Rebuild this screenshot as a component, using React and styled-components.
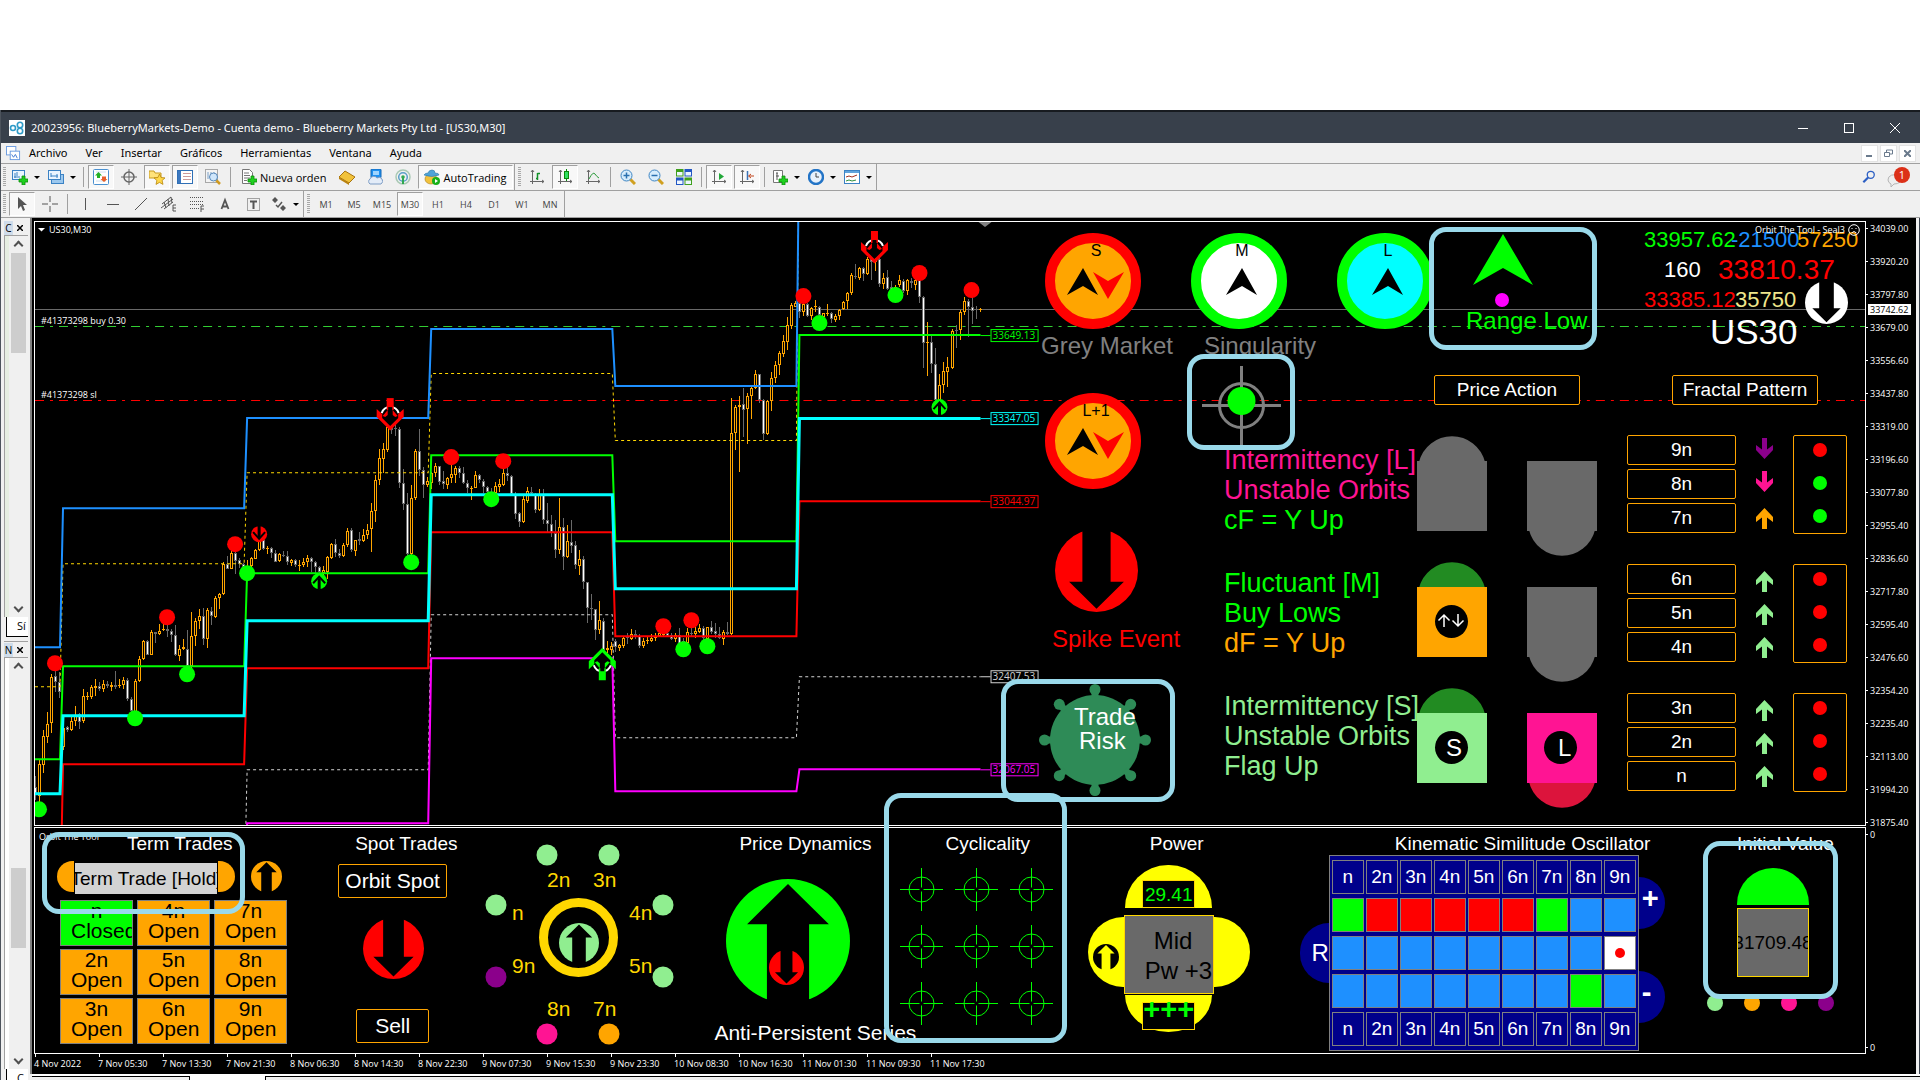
import React from "react";
import styled, { createGlobalStyle, css } from "styled-components";

const C = {
  lime: "#00ff00",
  red: "#ff0000",
  orange: "#ffa500",
  gold: "#ffd700",
  blue: "#1e90ff",
  aqua: "#00ffff",
  magenta: "#ff00ff",
  pink: "#ff1493",
  mint: "#90ee90",
  purple: "#8b008b",
  navy: "#00008b",
  gray: "#808080",
  dim: "#696969",
  forest: "#228b22",
  yellow: "#ffff00",
  callout: "#9ad9ea",
};

const ui = `"Open Sans", "Noto Sans", sans-serif`;
const chrome = `"Noto Sans", "Open Sans", sans-serif`;
const arial = `"Liberation Sans", Arial, sans-serif`;

const Global = createGlobalStyle`
  * { box-sizing: border-box; }
  html, body, #root { height: 100%; }
  body { margin: 0; background: #fff; overflow: hidden; font-family: ${ui}; font-size: 11px; }
  button { margin: 0; padding: 0; border: 0; background: none; font: inherit; color: inherit; }
  svg { display: block; flex: none; }
  ul, ol { list-style: none; margin: 0; padding: 0; }
`;

const Page = styled.div`
  height: 100%;
  padding-top: 110px;
`;
const Window = styled.div`
  height: 100%;
  display: flex;
  flex-direction: column;
  background: #f0f0f0;
  border-left: 1px solid #4c535c;
`;
const TitleBar = styled.header`
  height: 33px;
  flex: none;
  display: flex;
  align-items: center;
  border-top: 2px solid #171b20;
  background: #38404b;
  color: #fff;
  padding-left: 8px;
  gap: 6px;
`;
const Title = styled.h1`
  margin: 0;
  flex: 1;
  font-family: ${chrome};
  font-size: 11px;
  font-weight: 400;
`;
const WinButtons = styled.div`
  display: flex;
  padding-right: 2px;
`;
const WinButton = styled.button`
  width: 46px;
  height: 30px;
  display: grid;
  place-items: center;
`;
const MenuBar = styled.nav`
  height: 21px;
  flex: none;
  display: flex;
  align-items: center;
  border-bottom: 1px solid #a0a0a0;
  padding: 0 4px 0 5px;
`;
const MenuList = styled.div`
  flex: 1;
  display: flex;
  gap: 18px;
  padding-left: 8px;
  font-family: ${chrome};
  button { font-size: 11px; line-height: 20px; }
`;
const MdiButton = styled.button`
  width: 17px;
  height: 17px;
  margin-left: 2px;
  display: grid;
  place-items: center;
  background: #fff;
  border: 1px solid #e3e3e3;
`;
const ToolRow = styled.div`
  height: 27px;
  flex: none;
  display: flex;
  align-items: center;
  border-bottom: 1px solid #a0a0a0;
  padding: 0 5px 0 2px;
`;
const Spacer = styled.div`
  flex: 1;
`;
const Grip = styled.span`
  width: 3px;
  height: 20px;
  margin-right: 2px;
  margin-left: ${(p) => (p.$lead ? "3px" : "0")};
  background: repeating-linear-gradient(#a8a8a8 0 1px, #f0f0f0 1px 2px);
`;
const Divider = styled.span`
  width: 1px;
  height: ${(p) => (p.$tall ? "26px" : "20px")};
  margin: 0 ${(p) => (p.$tall ? "0" : "3px")};
  background: #a0a0a0;
`;
const Tool = styled.button`
  height: 24px;
  min-width: 26px;
  margin: 0 1px;
  display: flex;
  align-items: center;
  justify-content: center;
  gap: 3px;
  padding: 0 ${(p) => (p.$label ? "5px" : "2px")};
  border: 1px solid transparent;
  ${(p) =>
    p.$on &&
    css`
      background: #f8f8f8;
      border-color: #a0a0a0 #fff #fff #a0a0a0;
    `}
`;
const Caret = styled.i`
  border: 3px solid transparent;
  border-top-color: #000;
  border-bottom: 0;
  margin-left: 3px;
`;
const Period = styled(Tool)`
  font-size: 9px;
  color: #444;
`;
const Workspace = styled.div`
  flex: 1;
  min-height: 0;
  display: flex;
`;

/* Docked side panes */
const Dock = styled.aside`
  width: 31px;
  flex: none;
  display: flex;
  flex-direction: column;
  border-right: 2px solid #808080;
  padding: 2px 2px 0 3px;
`;
const Pane = styled.section`
  flex: ${(p) => (p.$grow ? "1" : "0 0 422px")};
  min-height: 0;
  margin-bottom: ${(p) => (p.$grow ? "-20px" : "0")};
  display: flex;
  flex-direction: column;
  border-bottom: 1px solid #a0a0a0;
`;
const PaneHead = styled.div`
  height: 15px;
  flex: none;
  display: flex;
  align-items: center;
  gap: 4px;
  font-size: 10px;
  span { background: #cfdcea; width: 9px; text-align: center; }
`;
const PaneBody = styled.div`
  flex: 1;
  display: flex;
  border: 1px solid #a0a0a0;
  border-width: 1px 0 0 1px;
  background: linear-gradient(90deg, ${(p) => p.$tint} 4px, #f0f0f0 4px);
`;
const Scroll = styled.div`
  width: 16px;
  margin-left: auto;
  margin-right: 2px;
  display: flex;
  flex-direction: column;
  align-items: center;
  padding: 6px 0;
  &::before, &::after { content: ""; width: 5px; height: 5px; border: 2px solid #505050; flex: none; }
  &::before { border-width: 2px 0 0 2px; transform: rotate(45deg); }
  &::after { border-width: 0 2px 2px 0; transform: rotate(45deg); }
`;
const Thumb = styled.div`
  width: 15px;
  height: ${(p) => p.$h}px;
  margin: ${(p) => p.$top}px 0 auto;
  background: #cdcdcd;
`;
const PaneTab = styled.div`
  height: 20px;
  flex: none;
  margin: 0 0 4px 2px;
  padding-left: 10px;
  border: 1px solid #000;
  border-width: 0 0 1px 1px;
  background: #fff;
  overflow: hidden;
  line-height: 18px;
`;

/* Chart window */
const Chart = styled.main`
  position: relative;
  flex: 1;
  min-width: 0;
  display: flex;
  flex-direction: column;
  background: #000;
  color: #fff;
  padding: 3px 0 0 2px;
`;
const WindowEdge = styled.div`
  width: 4px;
  background: #f0f0f0;
  border-right: 1px solid #38404b;
`;
const MainRow = styled.div`
  flex: 1;
  min-height: 0;
  display: grid;
  grid-template-columns: minmax(0, 1fr) 50px;
  margin-bottom: 1px;
`;
const Plot = styled.section`
  position: relative;
  border: 1px solid #fff;
  overflow: hidden;
`;
const PlotArt = styled.svg`
  width: 100%;
  height: 100%;
`;
const Scale = styled.ol`
  position: relative;
  display: flex;
  flex-direction: column;
  justify-content: space-between;
  font-size: 9px;
  line-height: 13px;
  margin: 1px 0 ${(p) => (p.$over ? "-3px" : "0")};
`;
const ScaleItem = styled.li`
  display: flex;
  align-items: center;
  gap: 2px;
  &::before { content: ""; width: 2px; height: 1px; background: #fff; }
`;
const PriceTag = styled.li`
  position: absolute;
  left: 2px;
  top: 82px;
  background: #fff;
  color: #000;
  line-height: 11px;
  padding: 0 3px 0 2px;
`;

const Board = styled.div`
  position: absolute;
  inset: 0;
  display: flex;
  justify-content: flex-end;
  padding: 11px 1px 0 0;
  font-family: ${arial};
`;
const Stack = styled.div`
  display: flex;
  flex-direction: column;
  align-items: flex-start;
  width: ${(p) => (p.$w ? p.$w + "px" : "auto")};
  padding-left: ${(p) => p.$in || 0}px;
  flex: none;
`;
const Row = styled.div`
  display: flex;
  align-items: flex-start;
`;
const Block = styled.div`
  margin-top: ${(p) => p.$top || 0}px;
  margin-left: ${(p) => p.$in || 0}px;
`;
const Caption = styled.div`
  font-size: 24px;
  line-height: 28px;
  white-space: nowrap;
  color: ${(p) => p.$c};
  margin-top: ${(p) => p.$top || 0}px;
  margin-left: ${(p) => p.$in || 0}px;
`;
const Signature = styled.div`
  position: absolute;
  top: 1px;
  right: 5px;
  font-family: ${ui};
  font-size: 9px;
  line-height: 14px;
  display: flex;
  align-items: center;
  gap: 3px;
`;
const Quotes = styled.div`
  width: 216px;
  margin: -7px 4px 0 auto;
  font-size: 22px;
  white-space: nowrap;
`;
const QuoteRow = styled.div`
  display: grid;
  grid-template-columns: ${(p) => p.$cols};
  align-items: center;
  height: ${(p) => p.$h}px;
`;
const Quote = styled.span`
  color: ${(p) => p.$c || "#fff"};
  font-size: ${(p) => (p.$big ? "28px" : "22px")};
  padding-bottom: ${(p) => (p.$low ? "4px" : "0")};
`;
const Symbol = styled.div`
  font-size: 35px;
  line-height: 40px;
  margin: -12px 0 0 66px;
`;
const Box = styled.button`
  width: ${(p) => p.$w}px;
  height: ${(p) => p.$h || 30}px;
  border: 1px solid ${C.orange};
  border-radius: 2px;
  background: #000;
  color: #fff;
  font-family: ${arial};
  font-size: ${(p) => p.$size || 19}px;
  line-height: 28px;
  white-space: nowrap;
`;
const TopRow = styled(Row)`
  width: 100%;
  height: 133px;
`;
const Actions = styled(Row)`
  padding: 9px 0 30px 17px;
  gap: 92px;
`;
const Readings = styled.div`
  display: flex;
  flex-direction: column;
  gap: 33px;
  padding-left: 37px;
`;
const Reading = styled.p`
  margin: 0;
  font-size: 27px;
  line-height: 30px;
  white-space: nowrap;
  color: ${(p) => p.$c};
`;
const Capsules = styled.div`
  display: grid;
  grid-template-columns: 70px 70px;
  gap: 6px 40px;
  width: 210px;
  padding-top: 1px;
  svg:nth-child(even) { margin-top: 25px; }
`;
const Ladder = styled.div`
  display: grid;
  gap: 30px;
`;
const Rungs = styled.div`
  display: grid;
  grid-template-columns: 109px 57px 54px;
`;
const RungList = styled.div`
  display: grid;
  gap: 3px;
`;
const Pointers = styled.div`
  display: grid;
  grid-template-rows: repeat(3, 33px);
  justify-items: center;
  svg { margin-top: 7px; }
  svg[data-dir="down"] { margin-top: 3px; }
`;
const Lights = styled.div`
  display: grid;
  grid-template-rows: repeat(3, 33px);
  justify-items: center;
  height: 99px;
  border: 1px solid ${C.orange};
  border-radius: 2px;
  background: #000;
  padding-top: 7px;
`;
const Dot = styled.i`
  width: ${(p) => p.$d || 14}px;
  height: ${(p) => p.$d || 14}px;
  border-radius: 50%;
  background: ${(p) => p.$c};
`;

/* Indicator panel */
const SubRow = styled.div`
  height: 227px;
  flex: none;
  display: grid;
  grid-template-columns: minmax(0, 1fr) 50px;
`;
const SubPlot = styled.section`
  position: relative;
  display: flex;
  justify-content: space-between;
  border: 1px solid #fff;
  font-family: ${arial};
`;
const SubName = styled.div`
  position: absolute;
  left: 4px;
  top: 2px;
  font-family: ${ui};
  font-size: 9px;
  line-height: 13px;
`;
const Panel = styled.section`
  width: ${(p) => p.$w}px;
  flex: none;
  padding-top: 3px;
`;
const PanelTitle = styled.h2`
  margin: 0;
  padding-left: ${(p) => p.$in}px;
  font-size: 19px;
  font-weight: 400;
  line-height: 26px;
  white-space: nowrap;
`;
const Pill = styled.div`
  display: flex;
  align-items: flex-start;
  padding: 4px 0 0 22px;
  margin-bottom: 5px;
`;
const Cap = styled.i`
  width: 17px;
  height: 31px;
  background: ${C.orange};
  border-radius: ${(p) => (p.$end ? "0 16px 16px 0" : "16px 0 0 16px")};
`;
const PillButton = styled.button`
  width: 144px;
  height: 33px;
  margin-top: 1px;
  display: flex;
  align-items: center;
  justify-content: center;
  background: #d3d3d3;
  border: 1px solid #000;
  color: #000;
  font-family: ${arial};
  font-size: 19px;
  white-space: nowrap;
  overflow: hidden;
`;
const Terms = styled.div`
  display: grid;
  grid-template-columns: repeat(3, 73px);
  gap: 3px 4px;
  padding-left: 25px;
`;
const Term = styled.button`
  height: 46px;
  overflow: hidden;
  border: 1px solid ${C.gray};
  background: ${(p) => p.$c};
  color: #000;
  font-family: ${arial};
  font-size: 21px;
  line-height: 20px;
  display: flex;
  flex-direction: column;
  align-items: center;
  justify-content: flex-start;
  span + span { width: 51px; text-align: left; }
`;
const SeriesName = styled.div`
  font-size: 21px;
  line-height: 26px;
  white-space: nowrap;
  padding: 17px 0 0 34px;
  width: 0;
`;
const Sights = styled.div`
  display: grid;
  grid-template-columns: repeat(3, 43px);
  gap: 14px 12px;
  padding: 11px 0 0 5px;
`;
const Clover = styled.div`
  display: grid;
  grid-template-columns: 36px 90px 36px;
  grid-template-rows: 50px 80px 37px;
  padding: 8px 0 0 23px;
  justify-items: center;
`;
const Dome = styled.div`
  display: flex;
  justify-content: center;
  align-items: ${(p) => (p.$down ? "flex-start" : "flex-end")};
  grid-column: 2;
  width: 87px;
  height: ${(p) => (p.$down ? "37px" : "43px")};
  padding-top: ${(p) => (p.$down ? "7px" : "0")};
  background: ${C.yellow};
  border-radius: ${(p) => (p.$down ? "0 0 50% 50% / 0 0 100% 100%" : "44px 44px 0 0")};
`;
const Readout = styled.output`
  width: 53px;
  height: 28px;
  flex: none;
  border: 1px solid ${C.gold};
  background: #000;
  color: ${C.lime};
  font-size: ${(p) => (p.$marks ? "29px" : "19px")};
  font-weight: ${(p) => (p.$marks ? "700" : "400")};
  line-height: ${(p) => (p.$marks ? "12px" : "28px")};
  text-align: center;
`;
const Wing = styled.div`
  width: 36px;
  height: 70px;
  grid-column: ${(p) => (p.$end ? 3 : 1)};
  margin-top: 2px;
  padding: 27px 0 0 5px;
  background: ${C.yellow};
  border-radius: ${(p) => (p.$end ? "0 36px 36px 0" : "36px 0 0 36px")};
`;
const PowerCore = styled.div`
  width: 90px;
  height: 79px;
  background: ${C.dim};
  border: 1px solid ${C.gold};
  color: #000;
  font-size: 24px;
  line-height: 30px;
  padding: 10px 0 0 20px;
  white-space: nowrap;
  div:first-child { padding-left: 9px; }
`;
const Oscillator = styled.div`
  display: flex;
  align-items: center;
  margin-top: -2px;
  padding-left: 24px;
`;
const RangeTab = styled.button`
  width: 29px;
  height: 60px;
  border-radius: 30px 0 0 30px;
  background: ${C.navy};
  color: #fff;
  font-family: ${arial};
  font-size: 24px;
  text-align: right;
`;
const StepTabs = styled.div`
  display: grid;
  gap: 42px;
  padding-bottom: 6px;
`;
const StepTab = styled.button`
  width: 26px;
  height: 52px;
  border-radius: 0 26px 26px 0;
  background: ${C.navy};
  color: #fff;
  font-family: ${arial};
  font-size: 29px;
  font-weight: 700;
  line-height: 30px;
  text-align: left;
  padding: 0 0 10px 3px;
`;
const Matrix = styled.table`
  border-collapse: separate;
  border-spacing: 2px 4px;
  border: 1px solid ${C.gray};
  background: ${C.navy};
  font-size: 19px;
  th, td {
    width: 32px;
    min-width: 32px;
    height: 34px;
    padding: 0;
    border: 1px solid ${C.gray};
    font-weight: 400;
    text-align: center;
    line-height: 30px;
  }
`;
const MatrixCell = styled.td`
  background: ${(p) => p.$c};
  i { display: block; margin: 0 auto; }
`;
const ValueDome = styled.div`
  width: 72px;
  height: 37px;
  margin: 11px 0 3px 46px;
  border-radius: 36px 36px 0 0;
  background: ${C.lime};
`;
const ValueBox = styled.output`
  width: 72px;
  height: 69px;
  margin-left: 46px;
  display: flex;
  align-items: center;
  justify-content: center;
  overflow: hidden;
  background: ${C.dim};
  border: 1px solid ${C.gold};
  color: #000;
  font-size: 19px;
`;
const Legend = styled.div`
  display: flex;
  gap: 21px;
  padding: 18px 0 0 16px;
`;
const TimeAxis = styled.ol`
  height: 20px;
  flex: none;
  display: flex;
  font-size: 9px;
  line-height: 13px;
  li { width: 64px; flex: none; white-space: nowrap; }
  li::before { content: ""; display: block; width: 1px; height: 3px; margin-left: 1px; background: #fff; }
`;
const Callout = styled.div`
  position: absolute;
  left: ${(p) => p.$x}px;
  top: ${(p) => p.$y}px;
  width: ${(p) => p.$w}px;
  height: ${(p) => p.$h}px;
  border: 5px solid ${C.callout};
  border-radius: 17px;
  pointer-events: none;
`;
const TabStrip = styled.footer`
  height: 6px;
  flex: none;
  display: flex;
  margin-left: 31px;
  background: #fff;
  border-top: 2px solid #fff;
  &::before { content: ""; width: 157px; background: #f0f0f0; border: 1px solid #000; border-width: 1px 1px 0 0; }
  &::after { content: ""; flex: 1; margin-left: 75px; background: #f0f0f0; border: 1px solid #000; border-width: 1px 0 0 1px; }
`;

/* ---------- drawings ---------- */

const ARROW_CUT = "50,4 83,36.5 67,36.5 67,101 33,101 33,36.5 17,36.5";

function ArrowDisc({ size, color, cut = "#000", down, ...rest }) {
  return (
    <svg width={size} height={size} viewBox="0 0 100 100" {...rest}>
      <g transform={down ? "rotate(180 50 50)" : undefined}>
        <circle cx="50" cy="50" r="50" fill={color} />
        <polygon points={ARROW_CUT} fill={cut} />
      </g>
    </svg>
  );
}

function Gauge({ ring, face, label, dual }) {
  return (
    <svg width="96" height="96" viewBox="0 0 96 96">
      <circle cx="48" cy="48" r="43" fill={face} stroke={ring} strokeWidth="10" />
      <text x="51" y="23" fontSize="16" fontFamily={arial} textAnchor="middle" fill="#000">{label}</text>
      <polygon points={dual ? "38,35 53,62 38,53 22,62" : "51,35 66,62 51,53 35,62"} fill="#000" />
      {dual && <polygon points="48,39 63,48 79,39 63,66" fill={C.red} />}
    </svg>
  );
}

function Sight() {
  return (
    <svg width="43" height="43" viewBox="0 0 43 43" stroke={C.lime} fill="none">
      <circle cx="21.5" cy="21.5" r="12.5" />
      <path d="M21.5 0V19.5M21.5 23.5V43M0 21.5H19.5M23.5 21.5H43" />
    </svg>
  );
}

function Capsule({ flip, dome, body, children }) {
  return (
    <svg width="70" height="95" viewBox="0 0 70 95">
      {flip ? (
        <>
          <path d="M2 69 A34 34 0 0 0 68 69 Z" fill={dome} />
          <rect width="70" height="70" fill={body} />
        </>
      ) : (
        <>
          <path d="M2 26 A34 34 0 0 1 68 26 Z" fill={dome} />
          <rect y="25" width="70" height="70" fill={body} />
        </>
      )}
      {children}
    </svg>
  );
}

function Pointer({ dir, color }) {
  return (
    <svg width="17" height="21" viewBox="0 0 17 21" data-dir={dir}>
      <path
        transform={dir === "down" ? "rotate(180 8.5 10.5)" : undefined}
        d="M8.5 0 L17 9 V14 L11 9.5 V21 H6 V9.5 L0 14 V9 Z"
        fill={color}
      />
    </svg>
  );
}

/* Candles: high, body top, body bottom, low, direction (1 up, 0 down); heights in thirds of a pixel. */
const SESSION_A = `1248,1280,1305,1320,0 1200,1212,1308,1325,1 1110,1128,1216,1240,1 1055,1092,1130,1148,1 942,952,1090,1120,1 925,948,967,995,0 935,965,997,1015,0 1090,1103,1160,1170,1 1098,1101,1111,1116,0 1068,1083,1111,1113,1 1038,1065,1083,1098,1 1058,1062,1086,1106,0 988,1009,1084,1090,1 995,1008,1011,1020,1 975,982,1011,1018,1 957,978,983,1008,1 965,978,988,992,0 960,973,988,996,1 963,973,978,984,0 965,976,980,994,1 933,976,980,988,0 957,974,978,985,1 952,961,976,986,1 955,961,1018,1022,0 1012,1018,1052,1060,0 957,962,1055,1060,1 887,898,962,965,1 840,843,898,900,1 840,843,884,886,0 810,817,884,886,1 815,817,821,848,0 792,812,821,826,1 790,806,810,814,1 790,808,813,830,0 808,812,826,845,0 795,824,884,888,0 855,868,887,902,1 838,862,868,871,1 810,867,917,925,0 756,829,917,930,1 775,784,829,858,1 747,768,782,808,1 745,768,838,856,0 743,751,838,863,1 741,753,768,796,0 707,714,770,774,1 700,703,713,746,1 607,611,703,706,1 588,611,626,628,0 560,578,626,628,1 565,580,604,642,0 595,600,613,625,0 610,613,622,640,0 600,617,622,630,1 592,595,617,620,1 568,571,596,598,1 535,542,570,572,1 535,540,566,571,0 557,564,566,581,1 562,565,580,595,0 570,580,605,606,0 580,583,604,606,1 573,584,586,590,0 572,587,607,615,0 596,601,608,618,1 597,600,616,620,0 600,614,617,632,1 594,605,616,620,1 585,595,606,620,1 590,594,606,636,0 603,606,622,640,0 618,620,636,640,0 618,630,640,650,1 588,592,636,658,1 550,553,593,596,1 537,553,578,590,0 568,579,588,594,0 548,556,589,592,1 503,514,556,560,1 505,511,571,575,0 540,541,573,587,1 516,537,543,555,0 508,526,544,546,1 492,510,526,536,1 430,454,508,576,1 345,361,454,485,1 267,295,361,375,1 250,268,297,340,1 195,200,270,275,1 190,200,210,222,0 190,204,208,228,0 200,207,370,384,0 328,370,433,450,0 400,433,583,590,0 375,415,583,590,1 268,273,415,420,1 207,273,331,347,0 320,331,376,414,0 352,364,376,380,1 336,338,370,388,1 310,318,338,350,1 318,319,366,376,0 333,364,373,388,0 350,353,374,386,1 315,343,354,370,1 318,325,345,368,1 318,325,338,353,0 322,338,370,372,0 360,370,385,400,0 378,383,386,420,1 332,345,383,385,1 342,346,361,368,0 358,363,381,398,0 378,381,396,400,0 385,395,402,405,0`;
const SESSION_B = `785,798,818,825,1 777,793,800,815,1 745,760,794,797,1 742,760,768,784,0 765,768,822,826,0 815,823,881,898,0 876,880,905,920,0 827,838,905,908,1 802,814,842,848,1 800,815,820,826,0 820,825,870,880,0 808,826,870,872,1 808,824,899,912,0 850,900,912,935,0 885,912,935,952,0 900,938,990,1015,0 835,922,990,1003,1 893,922,1012,1050,0 915,963,1012,1014,1 900,965,978,998,0 962,976,1036,1046,0 990,1018,1037,1064,1 1008,1018,1087,1106,0 1085,1087,1165,1208,0 1122,1165,1168,1200,0 1166,1168,1231,1260,0 1143,1201,1231,1243,1 1195,1202,1290,1296,0 1262,1285,1290,1300,1 1267,1277,1290,1305,1 1258,1264,1282,1295,0 1272,1276,1283,1292,1 1250,1254,1277,1285,1 1240,1252,1254,1272,0 1228,1243,1256,1260,1 1230,1243,1248,1258,0 1242,1248,1277,1283,0 1254,1262,1277,1283,1 1248,1260,1262,1273,1 1243,1255,1262,1266,1 1238,1249,1255,1262,1 1236,1240,1248,1252,1 1236,1240,1246,1250,1 1236,1240,1247,1252,0 1240,1246,1256,1260,0 1240,1246,1258,1266,1 1225,1246,1280,1285,0 1255,1262,1275,1280,0 1225,1237,1270,1275,1 1215,1238,1243,1248,0 1222,1233,1243,1253,1 1212,1223,1235,1240,1 1218,1224,1255,1262,0 1220,1222,1257,1262,1 1203,1220,1235,1243,0 1210,1234,1243,1255,0 1220,1243,1254,1256,0 1230,1237,1256,1275,1 1207,1237,1243,1245,0 533,640,1243,1246,1 556,562,638,690,1 528,556,560,756,1 503,552,569,650,0 520,529,566,672,1 500,505,527,597,1 450,463,505,508,1 462,463,541,550,0 538,541,643,660,0 540,544,641,646,1 457,475,544,573,1 424,436,475,490,1 393,400,436,466,1 346,364,401,412,1 290,316,365,390,1 250,256,318,326,1 243,248,260,262,1 245,250,277,294,0 245,252,277,287,1 250,252,287,292,0 260,265,288,300,1 240,258,262,276,1 258,260,284,290,0 278,280,290,294,1 252,278,281,288,1 276,280,297,310,0 283,287,299,305,1 268,270,288,300,1 243,245,268,270,1 217,218,244,268,1 160,164,218,224,1 133,167,172,178,0 142,145,173,180,1 140,144,163,182,0 110,116,163,166,1 110,118,125,180,0 110,120,125,152,1 112,118,193,200,0 160,175,193,206,1 150,172,206,210,0 183,200,210,215,0 195,200,208,210,1 165,181,196,200,1 178,184,212,220,0 178,181,212,224,1 175,182,190,205,0 175,180,194,210,1 175,181,230,248,0 228,230,370,444,0 306,367,370,467,1 348,367,433,458,0 384,433,540,545,0 463,496,540,545,1 427,454,496,520,1 412,442,455,500,1 328,332,443,446,1 316,330,332,384,0 270,277,331,360,1 232,244,277,286,1 238,244,262,350,0 230,262,273,312,0 258,267,271,297,0 264,268,271,276,1`;

const parse = (text, base) =>
  text.split(" ").map((c) => {
    const v = c.split(",").map(Number);
    return { y: v.slice(0, 4).map((n) => Math.round(base + n / 3)), up: v[4] === 1 };
  });
const CANDLES = [...parse(SESSION_A, 360), ...parse(SESSION_B, 220)];

function Candle({ i, y, up }) {
  const x = 35 + i * 4;
  const [hi, top, bottom, lo] = y;
  const h = Math.max(1, bottom - top);
  const wick = up ? C.orange : C.dim;
  return (
    <g shapeRendering="crispEdges">
      <rect x={x} y={hi} width="1" height={lo - hi} fill={wick} />
      <rect x={x - 1} y={top} width="3" height={h} fill={wick} />
      {h > 2 && <rect x={x} y={top + 1} width="1" height={h - 2} fill={up ? "#000" : "#fff"} />}
    </g>
  );
}

/* Daily level steps: y per session, joined by short ramps */
const EDGES = [[35, 60], [63, 244], [247, 428], [431, 612], [615, 796], [799, 980]];
const steps = (ys) =>
  "M" + ys.map((y, i) => (y == null ? null : `${EDGES[i][0]} ${y}L${EDGES[i][1]} ${y}`)).filter(Boolean).join("L");
const LEVELS = [
  { c: C.gold, w: 1, d: "3 3", ys: [686.5, 563.5, 472.5, 373.5, 440.5, 100.5] },
  { c: "#d3d3d3", w: 1, d: "3 3", ys: [null, 900.5, 769.5, 614.5, 737.5, 676.5] },
  { c: C.blue, w: 2, ys: [647, 508, 418, 329, 386, 120] },
  { c: C.lime, w: 2, ys: [759, 666, 573, 455, 541, 335] },
  { c: C.red, w: 2, ys: [920, 764, 668, 532, 636, 501] },
  { c: C.aqua, w: 3, ys: [793.5, 715.5, 620.5, 494.5, 588.5, 418.5] },
  { c: C.magenta, w: 2, ys: [null, 900, 823, 658, 791, 769] },
];
const TAGS = [
  [335, "33649.13", C.lime], [418, "33347.05", C.aqua], [501, "33044.97", C.red],
  [676, "32407.53", "#d3d3d3"], [769, "32067.05", C.magenta],
];
const HIGHS = [[55, 663], [167, 617], [235, 544], [451, 457], [503, 461], [663, 626], [691, 620], [803, 296], [919, 273], [971, 290]];
const LOWS = [[39, 809], [135, 718], [187, 674], [247, 573], [411, 562], [491, 499], [683, 649], [707, 646], [819, 323], [895, 295]];

function BigMarker({ x, y, color, down }) {
  return (
    <g transform={`translate(${x} ${y}) ${down ? "" : "scale(1 -1)"}`}>
      <circle cy="2.500" r="9" fill="#000" />
      <path d="M-8.500 -1A9 9 0 0 1 8.500 -1" fill="none" stroke="#fff" strokeWidth="2" />
      <path d="M-3.500 -16H3.500V-4H-3.500Z" fill={color} />
      <path d="M-2 -7H2V2H-2Z" fill="#000" />
      <path d="M-13.500 -5L-8 0V4L0 12L8 4V0L13.500 -5V3L0 16.500L-13.500 3Z" fill={color} />
      <path d="M-7.500 2L-2.500 -4V1L-5 3ZM7.500 2L2.500 -4V1L5 3Z" fill={color} />
    </g>
  );
}

function SmallMarker({ x, y, color, down }) {
  return (
    <g transform={`translate(${x} ${y}) ${down ? "scale(1 -1)" : ""}`}>
      <circle r="8" fill={color} />
      <path d="M-6 2L0 -4.500L6 2" fill="none" stroke="#000" strokeWidth="2" />
      <path d="M-1.500 -3H1.500V8.500H-1.500Z" fill="#000" />
    </g>
  );
}

function PriceArt() {
  return (
    <PlotArt viewBox="35 222 1829 603" preserveAspectRatio="xMinYMin slice" aria-label="US30 M30 price">
      <path d="M978 222H991L984.500 227Z" fill={C.gray} />
      <path d="M35 309.500H1864" stroke={C.dim} />
      <path d="M35 326.500H1864" stroke="#32cd32" strokeDasharray="9 6 3 6" />
      <path d="M35 400.500H1864" stroke={C.red} strokeDasharray="9 6 3 6" />
      {CANDLES.map((c, i) => <Candle key={i} i={i} {...c} />)}
      {LEVELS.map((l, i) => (
        <path key={i} d={steps(l.ys)} fill="none" stroke={l.c} strokeWidth={l.w} strokeDasharray={l.d} />
      ))}
      {TAGS.map(([y, t, c]) => (
        <g key={t}>
          <path d={`M980 ${y + 0.5}H990`} stroke={c} />
          <rect x="990.5" y={y - 5.5} width="47" height="12" fill="none" stroke={c} />
          <text x="992" y={y + 4} fontSize="10" fontFamily={ui} fill={c}>{t}</text>
        </g>
      ))}
      {HIGHS.map(([x, y]) => <circle key={x} cx={x} cy={y} r="8" fill={C.red} />)}
      {LOWS.map(([x, y]) => <circle key={x} cx={x} cy={y} r="8" fill={C.lime} />)}
      <SmallMarker x={259} y={534} color={C.red} down />
      <SmallMarker x={319} y={581} color={C.lime} />
      <SmallMarker x={939} y={407} color={C.lime} />
      <BigMarker x={390} y={414} color={C.red} down />
      <BigMarker x={874} y={247} color={C.red} down />
      <BigMarker x={602} y={664} color={C.lime} />
      <path d="M38 228H45L41.500 231.500Z" fill="#fff" />
      <g fill="#fff" fontFamily={ui} fontSize="9">
        <text x="49" y="233">US30,M30</text>
        <text x="41" y="324">#41373298 buy 0.30</text>
        <text x="41" y="398">#41373298 sl</text>
      </g>
    </PlotArt>
  );
}

function RiskWheel() {
  return (
    <svg width="114" height="114" viewBox="-57 -57 114 114" fill="#2e8b57">
      <circle r="45" />
      {[0, 45, 90, 135, 180, 225, 270, 315].map((a) => (
        <g key={a} transform={`rotate(${a})`}>
          <circle cy="-50.5" r="5.500" />
          <rect x="-3.500" y="-50" width="7" height="8" />
        </g>
      ))}
      <g fill="#fff" fontFamily={arial} fontSize="24">
        <text x="-21" y="-15">Trade</text>
        <text x="-16" y="9">Risk</text>
      </g>
    </svg>
  );
}

const ORBIT = [
  [547, 855, C.mint, "2n", 547, 887], [609, 855, C.mint, "3n", 593, 887],
  [496, 905, C.mint, "n", 512, 920], [663, 905, C.mint, "4n", 629, 920],
  [496, 977, C.purple, "9n", 512, 973], [663, 977, C.mint, "5n", 629, 973],
  [547, 1034, C.pink, "8n", 547, 1016], [609, 1034, C.orange, "7n", 593, 1016],
];

function OrbitWheel() {
  return (
    <svg width="200" height="222" viewBox="480 831 200 222">
      {ORBIT.map(([x, y, c, t, tx, ty]) => (
        <g key={t}>
          <circle cx={x} cy={y} r="10.500" fill={c} />
          <text x={tx} y={ty} fontFamily={arial} fontSize="21" fill={C.gold}>{t}</text>
        </g>
      ))}
      <circle cx="578.5" cy="937.5" r="35" fill="none" stroke={C.gold} strokeWidth="9" />
      <ArrowDisc x="559" y="923" size={40} color={C.mint} />
    </svg>
  );
}

/* Toolbar icons on a 16px grid */
const axes = <path d="M3.500 1v14M1 12.500h14M2 3l1.500-2 1.500 2M13 11l2 1.500-2 1.500" stroke="#666" fill="none" />;
const plus = <path d="M10 7h3v3h3v3h-3v3h-3v-3h-3v-3h3z" fill="#1fd01f" stroke="#0a8a0a" strokeWidth=".8" />;
const GLYPHS = {
  newChart: <><rect x=".5" y="1.500" width="12" height="9" fill="#eaf5ff" stroke="#3b82c4" /><path d="M3 4v5M5 3v4M2 8h6" stroke="#3b82c4" />{plus}</>,
  profiles: <><rect x="3.500" y="5.500" width="12" height="9" fill="#9cc8ee" stroke="#3b82c4" /><rect x=".5" y="1.500" width="12" height="9" fill="#eaf5ff" stroke="#3b82c4" /><path d="M3 7h7M3 4v4M9 5v4" stroke="#3b82c4" fill="none" /></>,
  market: <><rect x=".5" y=".5" width="15" height="15" rx="1" fill="#fff" stroke="#4a90d0" /><path d="M3 3h10M3 12h10" stroke="#cfe0f0" /><path d="M5.500 3L9 6.500H7V9H4V6.500H2Z" fill="#25b025" /><path d="M11 13L7.500 10H9V7.500h4V10h1.500Z" fill="#e8602a" /></>,
  target: <g stroke="#666" fill="none"><circle cx="8" cy="8" r="5" strokeWidth="1.500" /><path d="M8 0v16M0 8h16" /></g>,
  favorites: <><path d="M0 2h5l1 2h6v5H0Z" fill="#ffe27a" stroke="#c79a1e" /><path d="M10.500 5l1.600 3.500 3.900.4-2.900 2.600.9 3.900-3.500-2-3.500 2 .9-3.900L5 8.900l3.900-.4Z" fill="#ffd84a" stroke="#b8860b" strokeWidth=".8" /></>,
  terminal: <><rect x=".5" y="1.500" width="15" height="13" fill="#fff" stroke="#2f6fb5" /><path d="M1 2h3v12H1Z" fill="#3c78c0" /><path d="M6 4.500h8M6 7.500h8M6 10.500h8" stroke="#cc9a9a" /></>,
  tester: <><rect x=".5" y=".5" width="12" height="13" fill="#f4f4f4" stroke="#a8a8a8" /><path d="M3 3v7M6 3v7M9 3v7" stroke="#7a9fc5" /><path d="M11 11l4 4" stroke="#d09a20" strokeWidth="2.500" /><circle cx="8.500" cy="8" r="4" fill="#cfe6fb" stroke="#5588bb" /></>,
  order: <><path d="M1.500.5h7l3 3v11h-10Z" fill="#fff" stroke="#777" /><path d="M3 4h5M3 6.500h6M3 9h6M3 11.500h3" stroke="#777" />{plus}</>,
  book: <><path d="M0 8L6 2L16 8L10 14Z" fill="#f1c23a" stroke="#a87410" /><path d="M0 8l10 6v2L0 10Z" fill="#b9820f" /></>,
  cloud: <><rect x="4" y="0" width="10" height="9" rx="1" fill="#1e90f0" stroke="#1267b5" /><path d="M6 2h6v4H6Z" fill="#9fd4ff" /><path d="M3 15a3 3 0 010-5 4 4 0 017-1 3 3 0 014 6Z" fill="#e3ecf8" stroke="#7d9cc4" /></>,
  signal: <g fill="none"><circle cx="8" cy="8" r="7" stroke="#a9c9b4" strokeWidth="1.500" /><circle cx="8" cy="8" r="4.300" stroke="#5a9fc8" strokeWidth="1.500" /><circle cx="8" cy="8" r="1.800" fill="#2fa84f" /><path d="M8 9v6" stroke="#2fa84f" strokeWidth="2" /></g>,
  auto: <><ellipse cx="7" cy="10" rx="6" ry="5" fill="#f2c23c" stroke="#a87c18" strokeWidth=".6" /><path d="M0 6q1-2 4-2q1-3 4-3t3 3q4 0 4 2q-7 3-15 0Z" fill="#4ea3d8" stroke="#2d78a8" strokeWidth=".6" /><circle cx="12" cy="12" r="4" fill="#18b018" /><path d="M11 10l3 2-3 2Z" fill="#fff" /></>,
  bars: <>{axes}<path d="M8.500 4v7M7 9.500h1.500M8.500 4.500H11" stroke="#13902a" fill="none" strokeWidth="1.500" /></>,
  candles: <>{axes}<path d="M9.500 0v12" stroke="#0a8a0a" /><rect x="7.500" y="2.500" width="4" height="7" fill="#30e060" stroke="#0a8a0a" /></>,
  line: <>{axes}<path d="M4 10q4-8 6-5t4 4" stroke="#2a9a3a" fill="none" /></>,
  zoomIn: <><path d="M10 10l5 5" stroke="#d0a020" strokeWidth="3" /><circle cx="6.500" cy="6.500" r="5.500" fill="#d6ecfc" stroke="#3f86c4" /><path d="M6.500 3.500v6M3.500 6.500h6" stroke="#2a70b0" strokeWidth="1.500" /></>,
  zoomOut: <><path d="M10 10l5 5" stroke="#d0a020" strokeWidth="3" /><circle cx="6.500" cy="6.500" r="5.500" fill="#d6ecfc" stroke="#3f86c4" /><path d="M3.500 6.500h6" stroke="#2a70b0" strokeWidth="1.500" /></>,
  tiles: <><path d="M0 0h7.500v7.500H0ZM8.500 8.500H16V16H8.500Z" fill="#3fa01c" /><path d="M8.500 0H16v7.500H8.500ZM0 8.500h7.500V16H0Z" fill="#2257c4" /><path d="M1 3h5.500v3.500H1ZM9.500 3H15v3.500H9.500ZM1 11.500h5.500V15H1ZM9.500 11.500H15V15H9.500Z" fill="#eef6ff" /></>,
  scroll: <>{axes}<path d="M8 4l5 3.500L8 11Z" fill="#23a83a" /></>,
  shift: <>{axes}<path d="M8.500 2v9" stroke="#3b72b5" strokeWidth="1.500" /><path d="M15 7H10M12 5l-2.500 2L12 9" stroke="#c0441c" fill="none" /></>,
  indicators: <><path d="M1.500 1.500h9v12h-9Z" fill="#fff" stroke="#777" /><path d="M4 4h2M5 4v7M4 7h3" stroke="#555" />{plus}</>,
  clock: <><circle cx="8" cy="8" r="7" fill="#e8f1fb" stroke="#2374c6" strokeWidth="2.500" /><path d="M8 4v4h3" stroke="#444" fill="none" /></>,
  template: <><rect x=".5" y="1.500" width="15" height="13" fill="#fff" stroke="#3b82c4" /><path d="M1 2h14v2H1Z" fill="#5fa3dc" /><path d="M2 8l3-1 3 1 5-2" stroke="#a03020" fill="none" /><path d="M2 12l3-1 3 1 4-1" stroke="#309040" fill="none" /></>,
  cursor: <path d="M4 1v12l3-3 2 5 2-1-2-5h4Z" fill="#555" />,
  cross: <path d="M8 0v6M8 10v6M0 8h6M10 8h6" stroke="#555" />,
  vline: <path d="M8.500 2v12" stroke="#555" />,
  hline: <path d="M2 8.500h12" stroke="#555" />,
  trend: <path d="M2 14L14 2" stroke="#555" />,
  channel: <><path d="M0 12L12 3M1 8l9-7M3 13l9-7M3 6l2 6M7 3l1 7M10 1l1 6" stroke="#555" fill="none" /><path d="M15 9h-3v6h3M12 12h3" stroke="#555" fill="none" /></>,
  fibo: <><path d="M1 1.500h14M1 5.500h14M1 8.500h14M1 12.500h9" stroke="#555" strokeDasharray="1 1" /><path d="M15 10h-3v6M12 13h3" stroke="#555" fill="none" /></>,
  text: <path d="M4.500 13L8 4L11.500 13M6 10.500h4" stroke="#555" strokeWidth="1.800" fill="none" />,
  label: <><rect x="2.500" y="2.500" width="12" height="12" fill="none" stroke="#555" strokeDasharray="1 1" /><path d="M5 5.500h7M8.500 5v8" stroke="#555" strokeWidth="2" /></>,
  arrows: <><path d="M1 4l3-3 3 3-3 3ZM9 12l3-3 3 3-3 3Z" fill="#555" /><path d="M5 9l2 2 4-5" stroke="#555" fill="none" strokeWidth="1.500" /></>,
  app: <><rect width="16" height="16" fill="#fff" /><g fill="none" stroke="#2f9bc8" strokeWidth="1.600"><circle cx="4" cy="8" r="2.500" /><circle cx="11" cy="5" r="2.700" /><circle cx="11" cy="11" r="2.700" /></g></>,
  chartWin: <><rect x=".5" y=".5" width="10" height="9" fill="#fff" stroke="#6a9be0" /><rect x="4.500" y="5.500" width="10" height="9" fill="#fff" stroke="#6a9be0" /><path d="M6 9l2 3 2-3 2 4" stroke="#3f78d0" fill="none" /></>,
  search: <g fill="none" stroke="#2c5fc4"><circle cx="10" cy="5.500" r="4" strokeWidth="1.500" /><path d="M7 8.500L1.500 14" strokeWidth="2.500" /></g>,
};

const Icon = ({ name, size = 16 }) => (
  <svg width={size} height={size} viewBox="0 0 16 16" aria-hidden="true">{GLYPHS[name]}</svg>
);
const T = ({ n, on, drop, label }) => (
  <Tool $on={on} $label={label} aria-label={label || n}>
    <Icon name={n} />
    {label}
    {drop && <Caret />}
  </Tool>
);

const TERMS = [["n", "Closed"], ["4n", "Open"], ["7n", "Open"], ["2n", "Open"], ["5n", "Open"], ["8n", "Open"], ["3n", "Open"], ["6n", "Open"], ["9n", "Open"]];
const NS = ["n", "2n", "3n", "4n", "5n", "6n", "7n", "8n", "9n"];
const MATRIX = ["grrrrrgbb", "bbbbbbbbw", "bbbbbbbgb"];
const MATRIX_FILL = { g: C.lime, r: C.red, b: C.blue, w: "#fff" };
const PRICES = ["34039.00", "33920.20", "33797.80", "33679.00", "33556.60", "33437.80", "33319.00", "33196.60", "33077.80", "32955.40", "32836.60", "32717.80", "32595.40", "32476.60", "32354.20", "32235.40", "32113.00", "31994.20", "31875.40"];
const TIMES = ["4 Nov 2022", "7 Nov 05:30", "7 Nov 13:30", "7 Nov 21:30", "8 Nov 06:30", "8 Nov 14:30", "8 Nov 22:30", "9 Nov 07:30", "9 Nov 15:30", "9 Nov 23:30", "10 Nov 08:30", "10 Nov 16:30", "11 Nov 01:30", "11 Nov 09:30", "11 Nov 17:30"];
const LADDER = [
  [["9n", "down", C.purple, C.red], ["8n", "down", C.pink, C.lime], ["7n", "up", C.orange, C.lime]],
  [["6n", "up", C.mint, C.red], ["5n", "up", C.mint, C.red], ["4n", "up", C.mint, C.red]],
  [["3n", "up", C.mint, C.red], ["2n", "up", C.mint, C.red], ["n", "up", C.mint, C.red]],
];
const READINGS = [
  [["Intermittency [L]", C.pink], ["Unstable Orbits", C.pink], ["cF = Y Up", C.lime]],
  [["Fluctuant [M]", C.lime], ["Buy Lows", C.lime], ["dF = Y Up", C.orange]],
  [["Intermittency [S]", C.mint], ["Unstable Orbits", C.mint], ["Flag Up", C.mint]],
];
const CALLOUTS = [
  [10, 614, 203, 82], [852, 575, 183, 250], [969, 461, 174, 123],
  [1155, 136, 108, 96], [1397, 9, 168, 123], [1671, 623, 135, 158],
];

function Dashboard() {
  return (
    <Board>
      <Signature>
        Orbit The Tool - Seal3
        <svg width="12" height="12" viewBox="0 0 12 12" fill="none" stroke="#fff">
          <circle cx="6" cy="6" r="5.300" />
          <path d="M4 4v1M8 4v1M3.500 9q2.500-3 5 0" />
        </svg>
      </Signature>
      <Stack $w={146}>
        <Block $in={4}><Gauge ring={C.red} face={C.orange} label="S" dual /></Block>
        <Caption $c={C.gray} $top={3}>Grey Market</Caption>
        <Block $in={4} $top={33}><Gauge ring={C.red} face={C.orange} label="L+1" dual /></Block>
        <Block $in={14} $top={40}><ArrowDisc size={83} color={C.red} down /></Block>
        <Caption $c={C.red} $in={11} $top={13}>Spike Event</Caption>
        <Block $in={-3} $top={30}><RiskWheel /></Block>
      </Stack>
      <Stack $w={677}>
        <TopRow>
          <Stack $w={146}>
            <Block $in={4}><Gauge ring={C.lime} face="#fff" label="M" /></Block>
            <Caption $c={C.gray} $in={17} $top={3}>Singularity</Caption>
          </Stack>
          <Stack $w={132} $in={4}><Gauge ring={C.lime} face={C.aqua} label="L" /></Stack>
          <Stack $w={124}>
            <Block $in={8} $top={1}>
              <svg width="60" height="51" viewBox="0 0 60 51"><polygon points="30,0 60,51 30,34 0,51" fill={C.lime} /></svg>
            </Block>
            <Block $in={30} $top={8}><svg width="14" height="14"><circle cx="7" cy="7" r="7" fill={C.magenta} /></svg></Block>
            <Caption $c={C.lime} $in={1}>Range Low</Caption>
          </Stack>
          <Quotes>
            <QuoteRow $cols="87px 66px 63px" $h={28}>
              <Quote $c={C.lime}>33957.62</Quote><Quote $c={C.blue}>-21500</Quote><Quote $c={C.orange}>57250</Quote>
            </QuoteRow>
            <QuoteRow $cols="20px 54px 1fr" $h={26}>
              <span /><Quote>160</Quote><Quote $c={C.red} $big>33810.37</Quote>
            </QuoteRow>
            <QuoteRow $cols="91px 70px 44px" $h={44}>
              <Quote $c={C.red} $low>33385.12</Quote><Quote $c="#f0e68c" $low>35750</Quote>
              <ArrowDisc size={43} color="#fff" down />
            </QuoteRow>
            <Symbol>US30</Symbol>
          </Quotes>
        </TopRow>
        <Row>
          <Stack $w={230}>
            <Block $in={15}>
              <svg width="79" height="79" viewBox="0 0 79 79" stroke={C.gray} strokeWidth="3" fill="none">
                <circle cx="39.500" cy="39.500" r="22" />
                <path d="M39.500 0V79M0 39.500H79" />
                <circle cx="39.500" cy="35" r="14" fill={C.lime} stroke="none" />
              </svg>
            </Block>
            <Readings>
              {READINGS.map((lines, i) => (
                <div key={i}>{lines.map(([t, c]) => <Reading key={t} $c={c}>{t}</Reading>)}</div>
              ))}
            </Readings>
          </Stack>
          <Stack $w={447}>
            <Actions>
              <Box $w={146}>Price Action</Box>
              <Box $w={146}>Fractal Pattern</Box>
            </Actions>
            <Row>
              <Capsules>
                <Capsule dome={C.dim} body={C.dim} />
                <Capsule flip dome={C.dim} body={C.dim} />
                <Capsule dome={C.forest} body={C.orange}>
                  <circle cx="34.500" cy="59.500" r="16.500" />
                  <path d="M27 65V53M21.500 58.500L27 53L32.500 58.500M41 52V64M35.500 58.500L41 64L46.500 58.500" stroke="#fff" strokeWidth="1.500" fill="none" />
                </Capsule>
                <Capsule flip dome={C.dim} body={C.dim} />
                <Capsule dome={C.forest} body={C.mint}>
                  <circle cx="34.500" cy="59.500" r="16.500" />
                  <text x="29" y="68" fontSize="24" fontFamily={arial} fill="#fff">S</text>
                </Capsule>
                <Capsule flip dome="#dc143c" body={C.pink}>
                  <circle cx="33.500" cy="34.500" r="16.500" />
                  <text x="31" y="43" fontSize="24" fontFamily={arial} fill="#fff">L</text>
                </Capsule>
              </Capsules>
              <Ladder>
                {LADDER.map((g, i) => (
                  <Rungs key={i}>
                    <RungList>{g.map(([t]) => <Box key={t} $w={109}>{t}</Box>)}</RungList>
                    <Pointers>{g.map(([t, d, c]) => <Pointer key={t} dir={d} color={c} />)}</Pointers>
                    <Lights>{g.map(([t, , , c]) => <Dot key={t} $c={c} />)}</Lights>
                  </Rungs>
                ))}
              </Ladder>
            </Row>
          </Stack>
        </Row>
      </Stack>
    </Board>
  );
}

function Labels() {
  return <tr>{NS.map((n) => <th key={n} scope="col">{n}</th>)}</tr>;
}

function Indicator() {
  return (
    <SubPlot>
      <SubName>Orbit The Tool</SubName>
      <Panel $w={280}>
        <PanelTitle $in={92}>Term Trades</PanelTitle>
        <Pill>
          <Cap /><PillButton>Term Trade [Hold]</PillButton><Cap $end />
          <Block $in={16}><ArrowDisc size={31} color={C.orange} /></Block>
        </Pill>
        <Terms>
          {TERMS.map(([n, s]) => (
            <Term key={n} $c={s === "Closed" ? C.lime : C.orange}><span>{n}</span><span>{s}</span></Term>
          ))}
        </Terms>
      </Panel>
      <Panel $w={165}>
        <PanelTitle $in={40}>Spot Trades</PanelTitle>
        <Block $in={23} $top={7}><Box $w={109} $h={34} $size={21}>Orbit Spot</Box></Block>
        <Block $in={48} $top={20}><ArrowDisc size={61} color={C.red} down /></Block>
        <Block $in={41} $top={30}><Box $w={73} $h={34} $size={21}>Sell</Box></Block>
      </Panel>
      <Panel $w={200}><OrbitWheel /></Panel>
      <Panel $w={214}>
        <PanelTitle $in={59}>Price Dynamics</PanelTitle>
        <Block $in={46} $top={22}>
          <svg width="124" height="124" viewBox="0 0 124 124">
            <ArrowDisc size={124} color={C.lime} />
            <ArrowDisc x="43" y="71" size={35} color={C.red} down />
          </svg>
        </Block>
        <SeriesName>Anti-Persistent Series</SeriesName>
      </Panel>
      <Panel $w={170}>
        <PanelTitle $in={51}>Cyclicality</PanelTitle>
        <Sights>{NS.map((n) => <Sight key={n} />)}</Sights>
      </Panel>
      <Panel $w={211}>
        <PanelTitle $in={85}>Power</PanelTitle>
        <Clover>
          <Dome><Readout>29.41</Readout></Dome>
          <Wing><ArrowDisc size={26} color="#000" cut={C.yellow} /></Wing>
          <PowerCore><div>Mid</div><div>Pw +3</div></PowerCore>
          <Wing $end />
          <Dome $down><Readout $marks>+++</Readout></Dome>
        </Clover>
      </Panel>
      <Panel $w={415}>
        <PanelTitle $in={119}>Kinematic Similitude Oscillator</PanelTitle>
        <Oscillator>
          <RangeTab>R</RangeTab>
          <Matrix>
            <thead><Labels /></thead>
            <tbody>
              {MATRIX.map((r, i) => (
                <tr key={i}>
                  {[...r].map((k, j) => (
                    <MatrixCell key={j} $c={MATRIX_FILL[k]}>{k === "w" && <Dot $d={10} $c={C.red} />}</MatrixCell>
                  ))}
                </tr>
              ))}
            </tbody>
            <tfoot><Labels /></tfoot>
          </Matrix>
          <StepTabs><StepTab>+</StepTab><StepTab>-</StepTab></StepTabs>
        </Oscillator>
      </Panel>
      <Panel $w={174}>
        <PanelTitle $in={46}>Initial Value</PanelTitle>
        <ValueDome />
        <ValueBox>31709.48</ValueBox>
        <Legend>
          {[C.mint, C.orange, C.pink, C.purple].map((c) => <Dot key={c} $d={16} $c={c} />)}
        </Legend>
      </Panel>
    </SubPlot>
  );
}

export default function App() {
  return (
    <>
      <Global />
      <Page>
        <Window>
          <TitleBar>
            <Icon name="app" />
            <Title>20023956: BlueberryMarkets-Demo - Cuenta demo - Blueberry Markets Pty Ltd - [US30,M30]</Title>
            <WinButtons>
              <WinButton aria-label="Minimizar"><svg width="10" height="10"><path d="M0 5.500h10" stroke="#fff" /></svg></WinButton>
              <WinButton aria-label="Maximizar"><svg width="10" height="10"><rect x=".5" y=".5" width="9" height="9" fill="none" stroke="#fff" /></svg></WinButton>
              <WinButton aria-label="Cerrar"><svg width="10" height="10"><path d="M0 0l10 10M10 0L0 10" stroke="#fff" /></svg></WinButton>
            </WinButtons>
          </TitleBar>
          <MenuBar>
            <Icon name="chartWin" size={15} />
            <MenuList>
              {["Archivo", "Ver", "Insertar", "Gráficos", "Herramientas", "Ventana", "Ayuda"].map((m) => <button key={m}>{m}</button>)}
            </MenuList>
            <MdiButton aria-label="Minimizar gráfico"><svg width="7" height="7"><path d="M0 6h6" stroke="#6a7a8c" strokeWidth="2" /></svg></MdiButton>
            <MdiButton aria-label="Restaurar gráfico"><svg width="9" height="9" fill="none" stroke="#6a7a8c"><path d="M2.500 3V1h6v4H6M.5 3.500h5v4h-5z" /></svg></MdiButton>
            <MdiButton aria-label="Cerrar gráfico"><svg width="7" height="7"><path d="M0 0l7 7M7 0L0 7" stroke="#6a7a8c" strokeWidth="2" /></svg></MdiButton>
          </MenuBar>
          <ToolRow>
            <Grip /><T n="newChart" drop /><T n="profiles" drop /><Divider />
            <T n="market" on /><T n="target" /><T n="favorites" on /><T n="terminal" on /><T n="tester" /><Divider />
            <T n="order" label="Nueva orden" /><T n="book" /><T n="cloud" /><T n="signal" /><T n="auto" on label="AutoTrading" />
            <Divider $tall /><Grip $lead />
            <T n="bars" /><T n="candles" on /><T n="line" /><Divider />
            <T n="zoomIn" /><T n="zoomOut" /><T n="tiles" /><Divider />
            <T n="scroll" on /><T n="shift" on /><Divider />
            <T n="indicators" drop /><T n="clock" drop /><T n="template" drop /><Divider $tall />
            <Spacer />
            <Tool aria-label="Buscar"><Icon name="search" size={14} /></Tool>
            <Tool aria-label="1 mensaje">
              <svg width="24" height="22" viewBox="0 0 24 22">
                <path d="M1 14a6 5 0 0110-4l2 6a7 5 0 01-6 2l-3 3v-3a5 5 0 01-3-4Z" fill="#eee" stroke="#b5b5b5" />
                <circle cx="15" cy="9" r="8" fill="#dc3018" />
                <text x="15" y="13" fontSize="11" fontFamily={ui} textAnchor="middle" fill="#fff">1</text>
              </svg>
            </Tool>
          </ToolRow>
          <ToolRow>
            <Grip /><T n="cursor" on /><T n="cross" /><Divider />
            <T n="vline" /><T n="hline" /><T n="trend" /><T n="channel" /><T n="fibo" /><T n="text" /><T n="label" /><T n="arrows" drop />
            <Divider $tall /><Grip $lead />
            {["M1", "M5", "M15", "M30", "H1", "H4", "D1", "W1", "MN"].map((p) => <Period key={p} $on={p === "M30"}>{p}</Period>)}
            <Divider $tall />
          </ToolRow>
          <Workspace>
            <Dock>
              <Pane>
                <PaneHead><span>C</span>
                  <svg width="6" height="6"><path d="M0 0l6 6M6 0L0 6" stroke="#000" strokeWidth="1.500" /></svg>
                </PaneHead>
                <PaneBody $tint="#e6eee2"><Scroll><Thumb $h={100} $top={4} /></Scroll></PaneBody>
                <PaneTab>Sí</PaneTab>
              </Pane>
              <Pane $grow>
                <PaneHead><span>N</span>
                  <svg width="6" height="6"><path d="M0 0l6 6M6 0L0 6" stroke="#000" strokeWidth="1.500" /></svg>
                </PaneHead>
                <PaneBody $tint="#ffffff"><Scroll><Thumb $h={80} $top={197} /></Scroll></PaneBody>
                <PaneTab>C</PaneTab>
              </Pane>
            </Dock>
            <Chart>
              <MainRow>
                <Plot><PriceArt /><Dashboard /></Plot>
                <Scale $over>
                  {PRICES.map((p) => <ScaleItem key={p}>{p}</ScaleItem>)}
                  <PriceTag>33742.62</PriceTag>
                </Scale>
              </MainRow>
              <SubRow>
                <Indicator />
                <Scale><ScaleItem>0</ScaleItem><ScaleItem>0</ScaleItem></Scale>
              </SubRow>
              <TimeAxis>{TIMES.map((t) => <li key={t}>{t}</li>)}</TimeAxis>
              {CALLOUTS.map(([x, y, w, h]) => <Callout key={x} $x={x} $y={y} $w={w} $h={h} />)}
            </Chart>
            <WindowEdge />
          </Workspace>
          <TabStrip />
        </Window>
      </Page>
    </>
  );
}
